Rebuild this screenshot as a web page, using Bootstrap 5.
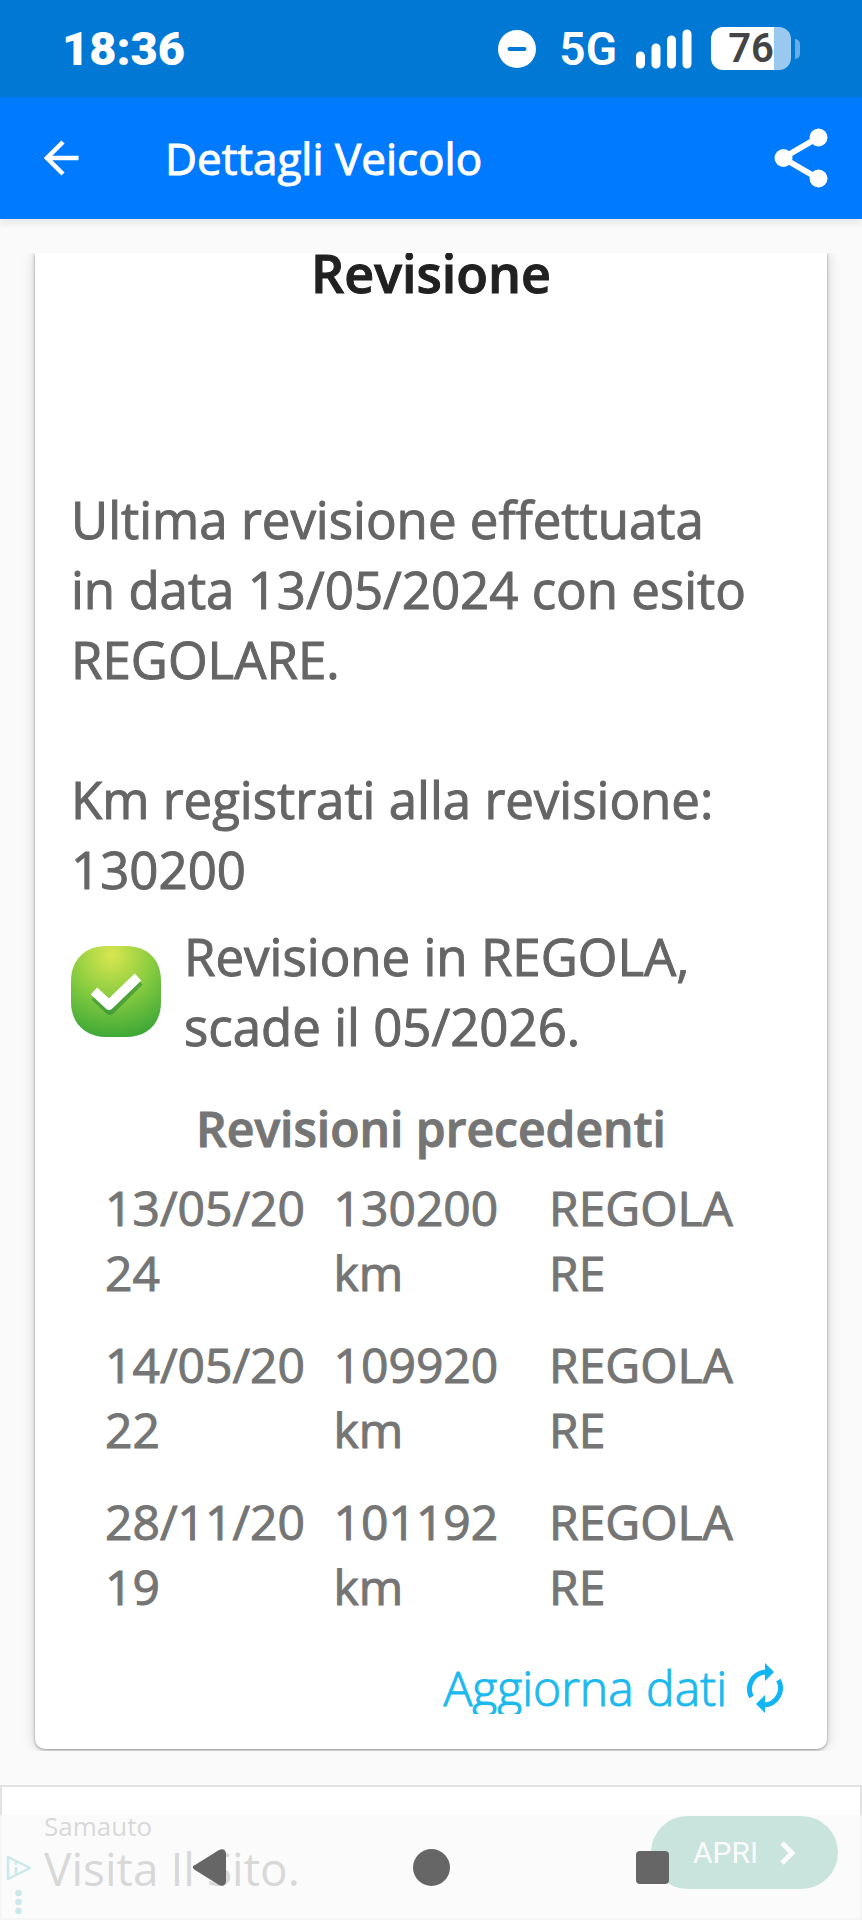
<!DOCTYPE html>
<html lang="it">
<head>
<meta charset="utf-8">
<meta name="viewport" content="width=device-width, initial-scale=1">
<title>Dettagli Veicolo</title>
<link href="https://cdn.jsdelivr.net/npm/bootstrap@5.3.0/dist/css/bootstrap.min.css" rel="stylesheet">
<style>
body { font-family: "Open Sans", "Noto Sans", sans-serif; background: #fafafa; color: #656565; }
svg { display: block; flex: none; }
.status-bar { background: #0078d4; height: 97px; padding: 0 62px; font-family: Roboto, sans-serif; color: #fff; }
.clock { font-size: 47px; font-weight: 900; line-height: 60px; }
.net { font-size: 46px; font-weight: 600; line-height: 60px; margin: 0 19px 0 23px; }
.battery { width: 80px; height: 43px; border-radius: 12px; background: linear-gradient(90deg, #fff 63px, #99c9ee 63px); color: #444; font-size: 40px; font-weight: 600; line-height: 43px; margin-left: 19px; }
.battery-tip { width: 5px; height: 20px; border-radius: 0 5px 5px 0; background: #66aee5; margin-left: 4px; }
.app-bar { background: #007aff; height: 122px; padding: 0 34px 0 44px; box-shadow: 0 6px 6px rgba(0,0,0,.06); color: #fff; z-index: 1; }
.app-title { font-size: 44px; line-height: 62px; margin-left: 86px; font-weight: 400; -webkit-text-stroke: 1px; }
.icon-btn { background: none; border: 0; padding: 0; color: inherit; }
.scroller { margin-top: 34px; padding: 0 35px 2px; overflow: hidden; }
.sheet { background: #fff; border-radius: 0 0 10px 10px; box-shadow: 0 1px 3px rgba(0,0,0,.35), 0 0 14px rgba(0,0,0,.18); padding: 0 36px 35px; }
.sheet-title { font-size: 52px; line-height: 40px; font-weight: 600; -webkit-text-stroke: 1px; color: #212121; margin-bottom: 191px; }
.body-text { font-size: 51px; line-height: 70px; font-weight: 400; -webkit-text-stroke: 1px; padding-right: 30px; }
.outcome { margin-top: 17px; gap: 23px; }
.history-title { font-weight: 600; font-size: 48px; line-height: 65px; -webkit-text-stroke: 1px; color: #757575; margin: 35px 0 0; }
.history-wrap { padding: 0 41px 0 26px; }
.history { width: 100%; font-size: 48px; line-height: 65px; color: #757575; table-layout: fixed; -webkit-text-stroke: 1px; }
.history td { padding: 14px 0 13px 8px; overflow-wrap: anywhere; vertical-align: top; }
.refresh { font-size: 48px; line-height: 66px; font-weight: 300; -webkit-text-stroke: 1px; color: #1cb9ee; height: 59px; overflow: hidden; gap: 19px; margin-top: 23px; padding-right: 7px; text-decoration: none; }
.refresh svg { margin-top: 8px; }
.ad-banner { margin-top: 34px; flex: 1 0 135px; background: #fff; border: 2px solid #e2e2e2; padding: 29px 22px 0 4px; color: #505050; }
.ad-marks { padding-top: 39px; }
.ad-text { margin-left: 12px; }
.ad-brand { font-size: 26px; line-height: 20px; }
.ad-link { display: block; font-size: 46px; line-height: 64px; color: #505050; text-decoration: none; }
.ad-cta { width: 187px; height: 73px; border-radius: 37px; border: 0; background: #058c64; color: #fff; font: 400 30px/73px Roboto, sans-serif; gap: 22px; }
.nav-keys { left: 0; right: 0; bottom: 0; height: 105px; padding: 0 11.5%; background: rgba(250,250,250,.8); }
.nav-keys .icon-btn { flex: 1; }
</style>
</head>
<body>
<div class="d-flex flex-column min-vh-100 position-relative">
  <div class="status-bar d-flex align-items-center justify-content-between">
    <span class="clock">18:36</span>
    <div class="d-flex align-items-center">
      <svg width="38" height="38" viewBox="0 0 38 38"><circle cx="19" cy="19" r="19" fill="#fff"/><path d="M11.500 19h15" stroke="#0078d4" stroke-width="4" stroke-linecap="round"/></svg>
      <span class="net">5G</span>
      <svg width="56" height="40" viewBox="0 0 56 40" stroke="#fff" stroke-width="9" stroke-linecap="round"><path d="M4.500 27v8M20 19v16M35.500 11v24M51 5v30"/></svg>
      <div class="battery text-center"><span>76</span></div>
      <span class="battery-tip"></span>
    </div>
  </div>

  <header class="app-bar d-flex align-items-center">
    <button class="icon-btn" type="button" aria-label="Indietro"><svg width="35" height="36" viewBox="0 0 35 36" fill="none" stroke="#fff" stroke-width="4.500"><path d="M34.500 18H4M19 2L3 18l16 16"/></svg></button>
    <h1 class="app-title mb-0">Dettagli Veicolo</h1>
    <button class="icon-btn ms-auto" type="button" aria-label="Condividi"><svg width="54" height="60" viewBox="0 0 54 60" fill="#fff"><path d="M9 30L45 9M9 30l36 21" stroke="#fff" stroke-width="6"/><circle cx="9.500" cy="30" r="9"/><circle cx="44.500" cy="9.500" r="9"/><circle cx="44.500" cy="50.500" r="9"/></svg></button>
  </header>

  <main class="scroller">
    <section class="sheet">
      <h2 class="sheet-title text-center">Revisione</h2>
      <p class="body-text mb-0">Ultima revisione effettuata<br>in data 13/05/2024 con esito REGOLARE.<br><br>Km registrati alla revisione: 130200</p>
      <div class="outcome d-flex align-items-center">
        <svg width="90" height="91" viewBox="0 0 90 91">
          <defs><radialGradient id="leaf" cx="0.450" cy="0.100" r="0.950"><stop offset="0" stop-color="#d9e64f"/><stop offset=".5" stop-color="#86cb3f"/><stop offset="1" stop-color="#38a536"/></radialGradient></defs>
          <path d="M35 0h20c22 0 35 14 35 35v21c0 22-14 35-35 35H35C14 91 0 77 0 56V35C0 14 14 0 35 0z" fill="url(#leaf)"/>
          <path d="M23 47l15 14 29-29" fill="none" stroke="#2c8a35" stroke-opacity=".6" stroke-width="10" stroke-linejoin="round" transform="translate(1 3)"/>
          <path d="M23 45l15 14 29-28" fill="none" stroke="#fff" stroke-width="9.500" stroke-linejoin="round"/>
        </svg>
        <p class="body-text mb-0">Revisione in REGOLA, scade il 05/2026.</p>
      </div>
      <h3 class="history-title text-center" id="history-title">Revisioni precedenti</h3>
      <div class="history-wrap">
        <table class="history" aria-labelledby="history-title">
          <colgroup><col style="width:35%"><col style="width:33%"><col></colgroup>
          <tbody>
            <tr><td>13/05/2024</td><td>130200 km</td><td>REGOLARE</td></tr>
            <tr><td>14/05/2022</td><td>109920 km</td><td>REGOLARE</td></tr>
            <tr><td>28/11/2019</td><td>101192 km</td><td>REGOLARE</td></tr>
          </tbody>
        </table>
      </div>
      <a class="refresh d-flex justify-content-end align-items-start" href="#">Aggiorna dati
        <svg width="38" height="50" viewBox="0 0 38 50" fill="none" stroke="#12b5f3" stroke-width="5"><path d="M5.500 34A17 17 0 0 1 20 9M32.500 17A17 17 0 0 1 18 42"/><path d="M19 0v18l9-9zM19 50V32l-9 9z" fill="#12b5f3" stroke="none"/></svg>
      </a>
    </section>
  </main>

  <aside class="ad-banner d-flex align-items-start">
    <div class="ad-marks">
      <svg width="26" height="60" viewBox="0 0 26 60" fill="none" stroke="#0fa0aa" stroke-width="2.500"><path d="M2 2v22l22-11z" stroke-linejoin="round"/><path d="M10 12v7M10 7v3"/><g fill="#0fa0aa" stroke="none"><circle cx="12.500" cy="38" r="3.300"/><circle cx="12.500" cy="47" r="3.300"/><circle cx="12.500" cy="56" r="3.300"/></g></svg>
    </div>
    <div class="ad-text">
      <div class="ad-brand">Samauto</div>
      <a class="ad-link" href="#">Visita Il Sito.</a>
    </div>
    <button class="ad-cta d-flex align-items-center justify-content-center ms-auto" type="button">APRI
      <svg width="16" height="24" viewBox="0 0 16 24" fill="none" stroke="#fff" stroke-width="5"><path d="M2 2l10 10L2 22"/></svg>
    </button>
  </aside>

  <nav class="nav-keys position-absolute d-flex align-items-center" aria-label="Navigazione di sistema">
    <button class="icon-btn d-flex justify-content-center" type="button" aria-label="Indietro"><svg width="33" height="37" viewBox="0 0 33 37" fill="#666"><path d="M2 16L26 1c4-2 7 0 7 4v27c0 4-3 6-7 4L2 21c-3-2-3-4 0-5z"/></svg></button>
    <button class="icon-btn d-flex justify-content-center" type="button" aria-label="Home"><svg width="37" height="37" viewBox="0 0 37 37"><circle cx="18.500" cy="18.500" r="18.500" fill="#666"/></svg></button>
    <button class="icon-btn d-flex justify-content-center" type="button" aria-label="App recenti"><svg width="33" height="33" viewBox="0 0 33 33"><rect width="33" height="33" rx="4" fill="#666"/></svg></button>
  </nav>
</div>
<script src="https://cdn.jsdelivr.net/npm/bootstrap@5.3.0/dist/js/bootstrap.bundle.min.js"></script>
</body>
</html>
